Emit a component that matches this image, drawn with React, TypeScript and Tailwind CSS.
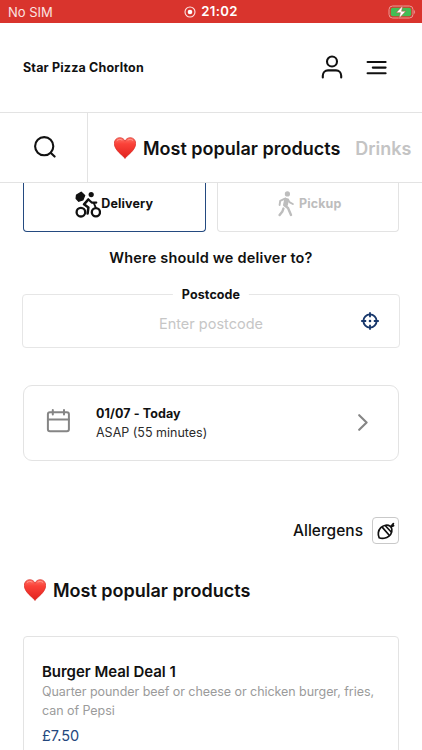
import { useId } from "react";

type IconProps = {
  className?: string;
};

function HeartIcon({ className }: IconProps) {
  const id = useId();

  return (
    <svg viewBox="0 0 22 22" className={className} aria-hidden="true">
      <defs>
        <linearGradient id={id} x1="0" y1="0" x2="0" y2="1">
          <stop offset="0" stopColor="#ff7468" />
          <stop offset="0.3" stopColor="#fb4239" />
          <stop offset="1" stopColor="#e0201c" />
        </linearGradient>
      </defs>
      <path
        d="M11 21.5C9.6 18.6 0.3 13.6 0.3 6.4C0.3 3 2.7 0.7 5.8 0.7C8.2 0.7 10.2 2 11 4.2C11.8 2 13.8 0.7 16.2 0.7C19.3 0.7 21.7 3 21.7 6.4C21.7 13.6 12.4 18.6 11 21.5Z"
        fill={`url(#${id})`}
        stroke="#d92a22"
        strokeWidth="0.7"
      />
      <path d="M3.2 3.4C4.4 2.2 6.6 2 8 3M14 3C15.4 2 17.6 2.2 18.8 3.4" fill="none" stroke="#ffb0a6" strokeWidth="0.9" strokeLinecap="round" opacity="0.7" />
    </svg>
  );
}

function CyclistIcon({ className }: IconProps) {
  return (
    <svg viewBox="0 0 26 27" className={className} fill="none" stroke="currentColor" strokeLinecap="round" strokeLinejoin="round" aria-hidden="true">
      <path d="M1.6 4.2L6.2 1.3L9.6 4.6L7.9 8.8L3.8 10.2L1.2 7.4Z" fill="currentColor" strokeWidth="1.4" />
      <circle cx="16.2" cy="3.6" r="2.6" fill="currentColor" stroke="none" />
      <circle cx="5.9" cy="21.2" r="4.3" strokeWidth="2.3" />
      <circle cx="20.9" cy="21.2" r="4.1" strokeWidth="2.3" />
      <path d="M13.2 8.6L9 13.3L13.4 16.4L12.6 22.6" strokeWidth="2.5" />
      <path d="M13.4 8.4L16.7 11.6H21.3" strokeWidth="2.1" />
      <path d="M18.8 12L20.6 16.4" strokeWidth="1.9" />
    </svg>
  );
}

function WalkerIcon({ className }: IconProps) {
  return (
    <svg viewBox="0 0 16 26" className={className} fill="none" stroke="currentColor" strokeLinecap="round" strokeLinejoin="round" aria-hidden="true">
      <circle cx="9.4" cy="2.9" r="2.6" fill="currentColor" stroke="none" />
      <path d="M7.6 7.8L6.2 14L10 17L13 24" strokeWidth="2.4" />
      <path d="M7.4 7.6L10 8.4L9.2 14L7.4 15Z" fill="currentColor" strokeWidth="1.6" />
      <path d="M6.4 7.8L2.2 9.8L1.6 14" strokeWidth="1.9" />
      <path d="M10 8.4L11.4 11.2L14.8 13" strokeWidth="1.9" />
      <path d="M5.4 17.6L4.4 20.4L1.6 24" strokeWidth="2.4" />
    </svg>
  );
}

function StatusBar() {
  return (
    <div className="grid h-[23px] grid-cols-3 items-center bg-[#d9342d] px-2 text-white">
      <span className="mt-px text-[13px] leading-none text-[#fbe3e1]">No SIM</span>
      <div className="flex items-center justify-center gap-[5px]">
        <svg viewBox="0 0 12 12" className="mt-px h-3 w-3" fill="none" aria-hidden="true">
          <circle cx="6" cy="6" r="5" stroke="#fde6e4" strokeWidth="1.1" />
          <circle cx="6" cy="6" r="2.3" fill="white" />
        </svg>
        <span className="mt-px text-[13.2px] font-semibold leading-none tracking-[0.35px]">21:02</span>
      </div>
      <svg viewBox="0 0 28 14" className="-mr-[2px] h-[14px] w-7 justify-self-end" aria-hidden="true">
        <rect x="1" y="1" width="24" height="12" rx="3.6" fill="none" stroke="#e99b95" />
        <rect x="2.8" y="2.7" width="20.4" height="8.6" rx="2" fill="#43bd55" />
        <path d="M26.2 5V9C27.4 8.4 27.4 5.6 26.2 5Z" fill="#e99b95" />
        <path d="M14.8 0.6L8.2 7.7H12.4L11 13.4L17.8 6.2H13.6Z" fill="white" stroke="#b94836" strokeWidth="0.5" />
      </svg>
    </div>
  );
}

function Header() {
  return (
    <header className="flex h-[89px] items-center justify-between pl-[23px] pr-[34px]">
      <h1 className="mt-px text-[12.5px] font-bold tracking-[0.17px]">Star Pizza Chorlton</h1>
      <div className="flex items-center gap-[24px]">
        <svg viewBox="0 0 22 24" className="-mt-px h-6 w-[22px]" fill="none" stroke="currentColor" strokeWidth="2.1" strokeLinecap="round" aria-hidden="true">
          <circle cx="11" cy="6.5" r="5" />
          <path d="M1.8 22.4V20.8C1.8 17.6 4 15.4 7 15.4H15C18 15.4 20.2 17.6 20.2 20.8V22.4" />
        </svg>
        <svg viewBox="0 0 21 15" className="-mt-px -ml-px mr-px h-[15px] w-[21px]" fill="none" stroke="currentColor" strokeWidth="2.1" strokeLinecap="round" aria-hidden="true">
          <path d="M1.6 2H19.6M6.8 7.6H19.6M1.6 13.2H19.6" />
        </svg>
      </div>
    </header>
  );
}

function CategoryBar() {
  return (
    <nav className="flex h-[71px] border-y border-[#e3e3e3]">
      <button className="flex w-[88px] shrink-0 items-center justify-center border-r border-[#e3e3e3]" aria-label="Search">
        <svg viewBox="0 0 22 22" className="-mt-px ml-[3px] h-[22px] w-[22px]" fill="none" stroke="currentColor" strokeWidth="2.1" strokeLinecap="round" aria-hidden="true">
          <circle cx="10.2" cy="10.2" r="9.1" />
          <path d="M16.9 16.9L20.6 20.6" />
        </svg>
      </button>
      <div className="flex items-center whitespace-nowrap pl-[26px] text-[18px] font-semibold">
        <HeartIcon className="mr-[7px] h-[22px] w-[22px]" />
        <span className="mt-px">Most popular products</span>
        <span className="mt-px ml-[15px] text-[#c4c4c4]">Drinks</span>
      </div>
    </nav>
  );
}

function DeliveryTabs() {
  return (
    <div className="flex gap-[11px] pl-[23px] pr-[23px] text-[12.5px] font-bold">
      <button className="flex h-[49px] flex-1 items-center justify-center rounded-b-[4px] border-x border-b border-[#244a80] pb-[6px]">
        <CyclistIcon className="mt-px h-[27px] w-[26px]" />
        <span className="tracking-[0.15px]">Delivery</span>
      </button>
      <button className="flex h-[49px] flex-1 items-center justify-center gap-[5px] rounded-b-[4px] border-x border-b border-[#e3e3e3] pb-[6px] text-[#bdbdbd]">
        <WalkerIcon className="ml-[4px] h-[26px] w-4" />
        <span className="tracking-[0.1px]">Pickup</span>
      </button>
    </div>
  );
}

function PostcodeField() {
  return (
    <div className="relative mx-[22px] mt-[25px] flex h-[54px] items-center justify-center rounded-[4px] border border-[#e6e6e6]">
      <span className="absolute -top-[9px] left-1/2 -translate-x-1/2 bg-white px-[9px] text-[12.5px] font-bold leading-[18px] tracking-[0.1px]">
        Postcode
      </span>
      <span className="mt-[6px] text-[14.5px] text-[#c6c6c6]">Enter postcode</span>
      <svg viewBox="0 0 18 18" className="absolute right-5 top-[17px] h-[18px] w-[18px] text-[#17376b]" fill="none" stroke="currentColor" aria-hidden="true">
        <circle cx="9" cy="9" r="6.6" strokeWidth="1.9" />
        <path d="M9 0.2V5.2M9 12.8V17.8M0.2 9H5.2M12.8 9H17.8" strokeWidth="1.8" />
        <circle cx="9" cy="9" r="1.3" fill="currentColor" stroke="none" />
      </svg>
    </div>
  );
}

function TimeCard() {
  return (
    <button className="mx-[23px] mt-[37px] flex h-[76px] items-center rounded-[9px] border border-[#e3e3e3] pl-[22px] pr-[30px] text-left">
      <svg viewBox="0 0 24 24" className="mt-[-5px] h-6 w-6 text-[#858585]" fill="none" stroke="currentColor" strokeWidth="2" strokeLinecap="round" aria-hidden="true">
        <rect x="1.9" y="3.3" width="21" height="19" rx="2" />
        <path d="M1.9 10.5H22.9M6.8 1V5.6M18 1V5.6" />
      </svg>
      <span className="ml-[26px] flex-1 text-[12.5px] leading-[19px]">
        <span className="block font-bold tracking-[0.1px]">01/07 - Today</span>
        <span className="block text-[#2b2b2b]">ASAP (55 minutes)</span>
      </span>
      <svg viewBox="0 0 10 17" className="-mt-px h-[17px] w-[10px] text-[#858585]" fill="none" stroke="currentColor" strokeWidth="2.1" strokeLinecap="round" strokeLinejoin="round" aria-hidden="true">
        <path d="M1.2 1.2L8.6 8.5L1.2 15.8" />
      </svg>
    </button>
  );
}

function AllergensLink() {
  return (
    <div className="mr-[23px] mt-14 flex h-[27px] items-center justify-end gap-[9px]">
      <span className="text-[15.5px] font-medium">Allergens</span>
      <span className="flex h-[27px] w-[27px] items-center justify-center rounded-[4px] border border-[#c9c9c9]">
        <svg viewBox="0 0 18 18" className="h-[18px] w-[18px]" fill="none" stroke="currentColor" strokeWidth="1.7" strokeLinecap="round" strokeLinejoin="round" aria-hidden="true">
          <path d="M2.2 15.8C0.6 12.8 1 8.4 3.8 5.6C6.4 3 10.8 2.4 13 4.2L14.2 5.4C15.8 8 14.8 11.8 12 14.2C9.4 16.4 5 17 2.2 15.8Z" />
          <path d="M5.4 5.4L12.2 13.2M8.6 4L14.2 10M14 4.4L16.4 1.6M14.8 4.4L16.6 3.6" />
        </svg>
      </span>
    </div>
  );
}

type ProductCardProps = {
  title: string;
  description: string;
  price: string;
};

function ProductCard({ title, description, price }: ProductCardProps) {
  return (
    <article className="mx-[23px] mt-[33px] h-[180px] rounded-[4px] border border-[#e3e3e3] px-[18px] pt-[24px]">
      <h3 className="text-[15px] font-semibold leading-[21px] tracking-[-0.03px]">{title}</h3>
      <p className="text-[12.5px] leading-[19px] tracking-[-0.05px] text-[#9b9b9b]">{description}</p>
      <p className="mt-[6px] text-[14.5px] leading-5 text-[#24477d]">{price}</p>
    </article>
  );
}

export default function App() {
  return (
    <main className="flex h-[750px] w-[422px] flex-col overflow-hidden bg-white font-['Inter',sans-serif] text-[#111111] *:shrink-0">
      <StatusBar />
      <Header />
      <CategoryBar />
      <DeliveryTabs />
      <h2 className="mt-[15px] text-center text-[14.5px] font-semibold leading-[22px] tracking-[0.19px]">Where should we deliver to?</h2>
      <PostcodeField />
      <TimeCard />
      <AllergensLink />
      <h2 className="ml-6 mt-[33px] flex h-[26px] items-center text-[18px] font-semibold">
        <HeartIcon className="mr-[7px] h-[22px] w-[22px]" />
        Most popular products
      </h2>
      <ProductCard
        title="Burger Meal Deal 1"
        description="Quarter pounder beef or cheese or chicken burger, fries, can of Pepsi"
        price="£7.50"
      />
    </main>
  );
}
